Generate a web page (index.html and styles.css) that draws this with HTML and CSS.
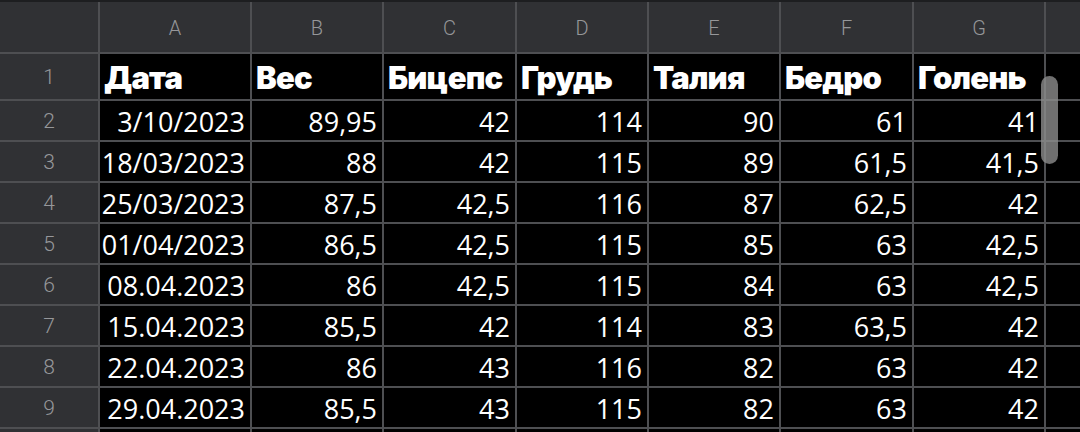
FILE: index.html
```html
<!DOCTYPE html>
<html lang="ru">
<head>
<meta charset="utf-8">
<link rel="stylesheet" href="styles.css">
</head>
<body>
<div class="screen">
  <div class="sheet">
    <div class="corner"></div>
    <div class="colhead">A</div><div class="colhead">B</div><div class="colhead">C</div><div class="colhead">D</div><div class="colhead">E</div><div class="colhead">F</div><div class="colhead">G</div><div class="colhead"></div>

    <div class="rowhead">1</div>
    <div class="cell title">Дата</div><div class="cell title">Вес</div><div class="cell title">Бицепс</div><div class="cell title">Грудь</div><div class="cell title">Талия</div><div class="cell title">Бедро</div><div class="cell title">Голень</div><div class="cell"></div>

    <div class="rowhead">2</div>
    <div class="cell num">3/10/2023</div><div class="cell num">89,95</div><div class="cell num">42</div><div class="cell num">114</div><div class="cell num">90</div><div class="cell num">61</div><div class="cell num">41</div><div class="cell"></div>

    <div class="rowhead">3</div>
    <div class="cell num">18/03/2023</div><div class="cell num">88</div><div class="cell num">42</div><div class="cell num">115</div><div class="cell num">89</div><div class="cell num">61,5</div><div class="cell num">41,5</div><div class="cell"></div>

    <div class="rowhead">4</div>
    <div class="cell num">25/03/2023</div><div class="cell num">87,5</div><div class="cell num">42,5</div><div class="cell num">116</div><div class="cell num">87</div><div class="cell num">62,5</div><div class="cell num">42</div><div class="cell"></div>

    <div class="rowhead">5</div>
    <div class="cell num">01/04/2023</div><div class="cell num">86,5</div><div class="cell num">42,5</div><div class="cell num">115</div><div class="cell num">85</div><div class="cell num">63</div><div class="cell num">42,5</div><div class="cell"></div>

    <div class="rowhead">6</div>
    <div class="cell num">08.04.2023</div><div class="cell num">86</div><div class="cell num">42,5</div><div class="cell num">115</div><div class="cell num">84</div><div class="cell num">63</div><div class="cell num">42,5</div><div class="cell"></div>

    <div class="rowhead">7</div>
    <div class="cell num">15.04.2023</div><div class="cell num">85,5</div><div class="cell num">42</div><div class="cell num">114</div><div class="cell num">83</div><div class="cell num">63,5</div><div class="cell num">42</div><div class="cell"></div>

    <div class="rowhead">8</div>
    <div class="cell num">22.04.2023</div><div class="cell num">86</div><div class="cell num">43</div><div class="cell num">116</div><div class="cell num">82</div><div class="cell num">63</div><div class="cell num">42</div><div class="cell"></div>

    <div class="rowhead">9</div>
    <div class="cell num">29.04.2023</div><div class="cell num">85,5</div><div class="cell num">43</div><div class="cell num">115</div><div class="cell num">82</div><div class="cell num">63</div><div class="cell num">42</div><div class="cell"></div>

    <div class="rowhead"></div>
    <div class="cell"></div><div class="cell"></div><div class="cell"></div><div class="cell"></div><div class="cell"></div><div class="cell"></div><div class="cell"></div><div class="cell"></div>
  </div>
  <div class="scrollbar"></div>
</div>
</body>
</html>
```

FILE: styles.css
```css
html, body {
  margin: 0;
  padding: 0;
  background: #000;
  width: 1080px;
  height: 432px;
  overflow: hidden;
}

.screen {
  position: relative;
  width: 1080px;
  height: 432px;
  overflow: hidden;
  background: #1d1e20;
  padding-top: 2px;
  box-sizing: border-box;
}

.sheet {
  display: grid;
  grid-template-columns: 98px 150px 130px 131px 130px 130px 131px 130px 1fr;
  grid-template-rows: 50px 45px repeat(9, 39px);
  gap: 2px;
  background: #4e4f52;
}

.corner,
.colhead,
.rowhead {
  background: #303134;
  color: #96979a;
  font-family: "Roboto", "Liberation Sans", sans-serif;
  font-weight: 300;
  display: flex;
  align-items: center;
  justify-content: center;
}

.colhead {
  font-size: 20px;
  padding-top: 2px;
}

.rowhead {
  font-size: 21px;
  padding-top: 1px;
}

.cell {
  background: #000;
  color: #fff;
  display: flex;
  align-items: center;
  overflow: hidden;
  white-space: nowrap;
}

.num {
  justify-content: flex-end;
  padding: 2px 5px 0 0;
  font-family: "Open Sans", "Noto Sans", sans-serif;
  font-size: 27px;
}

.title {
  justify-content: flex-start;
  align-items: flex-end;
  padding: 0 0 1px 4px;
  font-family: "Inter", "Roboto", sans-serif;
  font-weight: 900;
  font-size: 31px;
  letter-spacing: -0.8px;
  line-height: 40px;
}

.scrollbar {
  position: absolute;
  left: 1041px;
  top: 76px;
  width: 17px;
  height: 88px;
  border-radius: 9px;
  background: rgba(140, 140, 140, 0.8);
}
```
